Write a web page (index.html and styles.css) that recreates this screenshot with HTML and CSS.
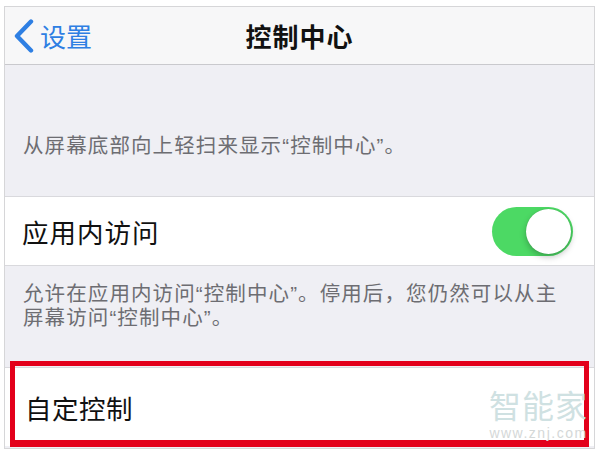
FILE: index.html
```html
<!DOCTYPE html>
<html lang="zh-CN">
<head>
  <meta charset="UTF-8" />
  <meta name="viewport" content="width=device-width, initial-scale=1" />
  <title>控制中心</title>
  <link rel="stylesheet" href="styles.css">
</head>
<body>
  <div class="screen">
    <header class="nav">
      <a class="back" href="#">
        <svg class="chevron" width="22" height="34" viewBox="0 0 22 34">
          <path d="M19 2.5 L5 17 L19 31.5" fill="none" stroke="#2e7fe3" stroke-width="4.4" stroke-linecap="round" stroke-linejoin="round"/>
        </svg>
        <span>设置</span>
      </a>
      <h1 class="title">控制中心</h1>
      <span></span>
    </header>

    <div class="section top">
      <p class="note">从屏幕底部向上轻扫来显示“控制中心”。</p>
    </div>

    <div class="cell">
      <span class="label">应用内访问</span>
      <span class="switch"><span class="knob"></span></span>
    </div>

    <div class="section mid">
      <p class="note">允许在应用内访问“控制中心”。停用后，您仍然可以从主<br>屏幕访问“控制中心”。</p>
    </div>

    <div class="cell custom">
      <span class="label">自定控制</span>
      <div class="highlight"></div>
      <div class="watermark">
        <span class="wm-big">智能家</span>
        <span class="wm-small">www.znj.com</span>
      </div>
    </div>
  </div>
</body>
</html>
```

FILE: styles.css
```css
body {
  margin: 0;
  background: #fff;
  font-family: "Liberation Sans", "Noto Sans CJK SC", sans-serif;
}
.screen {
  position: relative;
  margin: 6px 0 0 4px;
  width: 591px;
  height: 443px;
  box-sizing: border-box;
  border: 1px solid #d6d6d8;
  background: #efeff4;
  overflow: hidden;
}
.nav {
  display: grid;
  grid-template-columns: 1fr auto 1fr;
  align-items: center;
  height: 57px;
  background: #f7f7f8;
  border-bottom: 1px solid #c9c9cd;
}
.back {
  display: flex;
  align-items: center;
  gap: 6px;
  padding-left: 7px;
  color: #2e7fe3;
  text-decoration: none;
  font-size: 26px;
}
.title {
  margin: 0;
  font-size: 26px;
  font-weight: 600;
  letter-spacing: 1px;
  color: #111;
}
.section.top {
  padding: 69px 0 38px;
}
.section.mid {
  padding: 16px 0 37px;
}
.note {
  margin: 0;
  padding-left: 18px;
  font-size: 20.5px;
  line-height: 24px;
  letter-spacing: 1.1px;
  color: #6d6d72;
}
.cell {
  position: relative;
  display: flex;
  align-items: center;
  justify-content: space-between;
  height: 68px;
  padding: 0 21px 0 17px;
  background: #fff;
  border-top: 1px solid #d9d9dd;
  border-bottom: 1px solid #d9d9dd;
}
.label {
  font-size: 26.5px;
  letter-spacing: 1px;
  color: #111;
}
.switch {
  display: flex;
  justify-content: flex-end;
  align-items: center;
  width: 81px;
  height: 49px;
  box-sizing: border-box;
  padding: 2px;
  border-radius: 25px;
  background: #4cd964;
}
.knob {
  width: 45px;
  height: 45px;
  border-radius: 50%;
  background: #fff;
  box-shadow: 0 3px 6px rgba(0,0,0,0.25), 0 0 1px rgba(0,0,0,0.2);
}
.cell.custom {
  height: 78px;
  padding-left: 20px;
  border-bottom: none;
}
.cell.custom .label {
  letter-spacing: 0.5px;
}
.highlight {
  position: absolute;
  left: 5px;
  right: 5px;
  top: -7px;
  bottom: -1px;
  border: 5px solid #e3001b;
  border-bottom-width: 7px;
}
.watermark {
  position: absolute;
  right: 6px;
  top: 23px;
  display: flex;
  flex-direction: column;
  align-items: center;
  gap: 3px;
}
.wm-big {
  font-size: 32px;
  line-height: 32px;
  color: #cfe1e2;
  letter-spacing: 1px;
}
.wm-small {
  font-size: 14px;
  line-height: 14px;
  color: #d4d8d8;
  letter-spacing: 1.5px;
}
```
